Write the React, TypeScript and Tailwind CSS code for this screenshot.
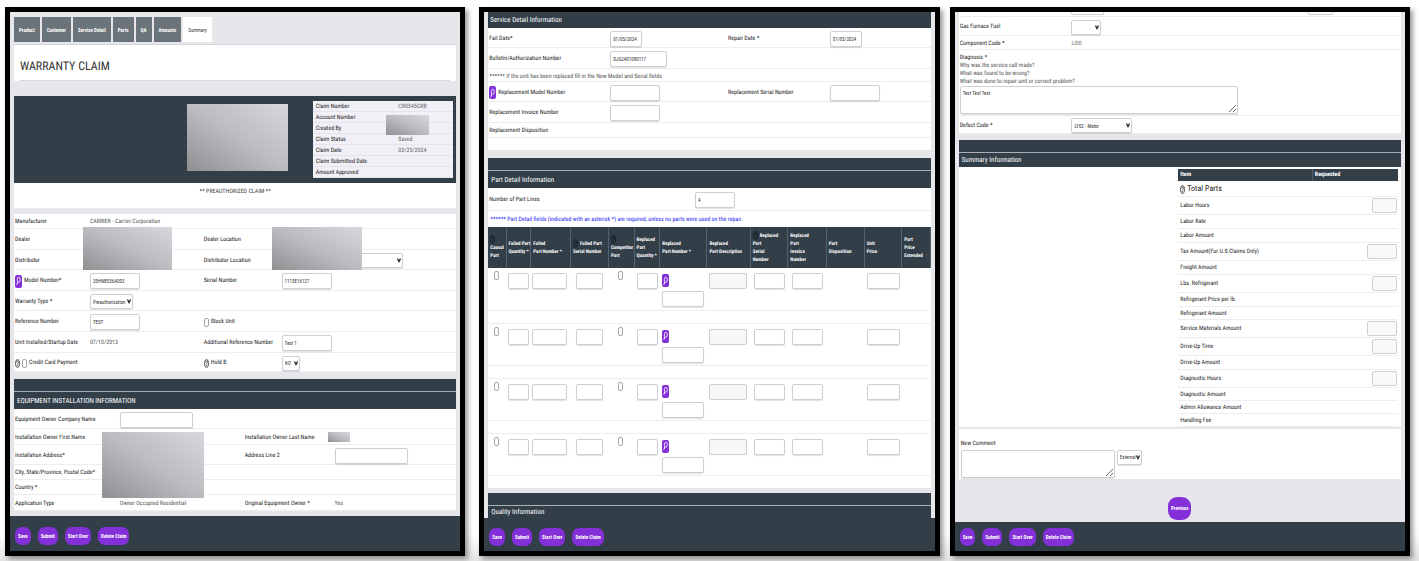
import { clsx } from "clsx";
import type { ReactNode } from "react";

const field =
  "block border border-[#cfcfd3] rounded-[2px] bg-white shadow-[0_1px_1px_rgba(0,0,0,0.12)] px-[2px] text-[5px] leading-[8px] text-[#333]";

function HelpIcon({ className }: { className?: string }) {
  return (
    <svg
      viewBox="0 0 10 18"
      className={clsx("w-[5px] h-[9px] shrink-0", className)}
      fill="none"
      stroke="currentColor"
      strokeWidth="1.600"
    >
      <ellipse cx="5" cy="9" rx="4" ry="8" />
      <path d="M3.4 6.5c0-3 3.4-3 3.2 0C6.5 8.500 5 8.500 5 11M5 12.500v1.800" strokeWidth="1.400" />
    </svg>
  );
}

function SearchButton({ label }: { label: string }) {
  return (
    <button
      type="button"
      aria-label={label}
      className="flex items-center justify-center w-[7px] h-[13px] shrink-0 rounded-[2px] bg-[#8430d8] text-white"
    >
      <svg viewBox="0 0 10 20" className="w-[5px] h-[10px]" fill="none" stroke="currentColor" strokeWidth="1.600">
        <ellipse cx="5.600" cy="7.500" rx="3" ry="5" />
        <path d="M3.800 12L1.500 17.500" strokeWidth="2" />
      </svg>
    </button>
  );
}

function Check({ id, label }: { id: string; label?: string }) {
  return (
    <input
      id={id}
      type="checkbox"
      aria-label={label}
      className="appearance-none block w-[5px] h-[9px] shrink-0 border border-[#a5a5aa] rounded-[2px] bg-white"
    />
  );
}

function TextBox({
  id,
  value,
  label,
  className,
}: {
  id: string;
  value?: string;
  label?: string;
  className?: string;
}) {
  return (
    <input
      id={id}
      type="text"
      aria-label={label}
      defaultValue={value}
      className={clsx(field, "h-[16px]", className)}
    />
  );
}

function Select({
  id,
  options,
  label,
  className,
}: {
  id: string;
  options: string[];
  label?: string;
  className?: string;
}) {
  return (
    <div className={clsx("relative", className)}>
      <select id={id} aria-label={label} className={clsx(field, "appearance-none w-full h-[15px]")}>
        {options.map((o) => (
          <option key={o}>{o}</option>
        ))}
      </select>
      <svg
        viewBox="0 0 8 10"
        className="absolute right-[2px] top-[5px] w-[4px] h-[5px] pointer-events-none"
        fill="none"
        stroke="#222"
        strokeWidth="2.500"
      >
        <path d="M1 1l3 6 3-6" />
      </svg>
    </div>
  );
}

function Redacted({ className }: { className: string }) {
  return (
    <div className={clsx("absolute bg-linear-to-tr from-[#909093] via-[#bcbbc0] to-[#d8d7dd]", className)} />
  );
}

function Panel({ children, className }: { children: ReactNode; className?: string }) {
  return (
    <section
      className={clsx(
        "flex flex-col flex-1 min-w-0 border-[5px] border-black bg-[#e7e6eb] shadow-[3px_3px_5px_rgba(0,0,0,0.4)]",
        className
      )}
    >
      {children}
    </section>
  );
}

function Actions({ className }: { className?: string }) {
  return (
    <footer className={clsx("flex items-center gap-[7px] bg-[#323e48] pl-[5px]", className)}>
      {["Save", "Submit", "Start Over", "Delete Claim"].map((name) => (
        <button
          key={name}
          type="button"
          className="h-[18px] px-[3px] rounded-[7px] bg-[#8430d8] text-white text-[5px] font-bold whitespace-nowrap"
        >
          {name}
        </button>
      ))}
    </footer>
  );
}

function SectionTitle({ children, className }: { children: ReactNode; className?: string }) {
  return (
    <div>
      <div className="h-[12px] bg-[#323e48]" />
      <h2
        className={clsx(
          "flex items-center pl-[3px] border-t border-[#a9b0b8] bg-[#323e48] text-white text-[7px]",
          className
        )}
      >
        {children}
      </h2>
    </div>
  );
}

function Row({ cols, className, children }: { cols: string; className: string; children?: ReactNode }) {
  return (
    <div className={clsx("grid items-center border-b border-[#ededf0] pl-[1px] pt-[2px]", cols, className)}>
      {children}
    </div>
  );
}

function Label({ htmlFor, children }: { htmlFor?: string; children: ReactNode }) {
  return (
    <label htmlFor={htmlFor} className="flex items-center gap-[2px] text-[#222] whitespace-nowrap">
      {children}
    </label>
  );
}

const tabs = ["Product", "Customer", "Service Detail", "Parts", "QA", "Amounts", "Summary"];

const claim = [
  ["Claim Number", "CR0345GRB"],
  ["Account Number", ""],
  ["Created By", ""],
  ["Claim Status", "Saved"],
  ["Claim Date", "03/25/2024"],
  ["Claim Submitted Date", ""],
  ["Amount Approved", ""],
];

const claimCols = "grid-cols-[75fr_114fr_78fr_175fr]";
const ownerCols = "grid-cols-[105fr_125fr_90fr_122fr]";
const serviceCols = "grid-cols-[121fr_118fr_102fr_101fr]";

function ClaimPanel() {
  return (
    <Panel className="mr-[14px]">
      <div className="flex-1 px-[4px]">
        <nav className="flex gap-[2px] pt-[5px] pb-[2px] border-b border-[#d3d6db]">
          {tabs.map((tab) => (
            <button
              key={tab}
              type="button"
              className={clsx(
                "h-[25px] px-[5px] text-[5px]",
                tab === "Summary" ? "bg-white text-[#333]" : "bg-[#6b737b] text-white font-bold"
              )}
            >
              {tab}
            </button>
          ))}
        </nav>
        <div className="h-[36px] bg-white px-[6px]">
          <h1 className="h-[36px] pt-[6px] flex items-center border-b border-[#d9d9dd] text-[12px] text-[#333]">
            WARRANTY CLAIM
          </h1>
        </div>
        <div className="relative mt-[15px] h-[87px] bg-[#323e48] flex justify-end pt-[5px] pr-[3px]">
          <Redacted className="left-[39%] top-[8px] w-[23%] h-[67px]" />
          <dl className="relative w-[32%] h-[77px] bg-[#f1f0f6]">
            {claim.map(([name, value]) => (
              <div
                key={name}
                className="grid grid-cols-[3fr_2fr] items-center h-[11px] pt-[2px] pl-[3px] border-b border-[#e5e4ea] leading-[8px]"
              >
                <dt className="text-[#222]">{name}</dt>
                <dd className="text-[#666]">{value}</dd>
              </div>
            ))}
            <Redacted className="left-[52%] top-[14px] w-[31%] h-[20px]" />
          </dl>
        </div>
        <p className="h-[25px] pt-[5px] bg-white text-center text-[#444]">** PREAUTHORIZED CLAIM **</p>

        <div className="relative mt-[6px] bg-white">
          <Row cols={claimCols} className="h-[15px]">
            <Label>Manufacturer</Label>
            <span>CARRIER - Carrier Corporation</span>
          </Row>
          <Row cols={claimCols} className="h-[21px]">
            <Label>Dealer</Label>
            <span />
            <Label>Dealer Location</Label>
          </Row>
          <Row cols={claimCols} className="h-[20px]">
            <Label>Distributor</Label>
            <span />
            <Label htmlFor="distributor-location">Distributor Location</Label>
            <Select id="distributor-location" options={[""]} className="w-[121px]" />
          </Row>
          <Row cols={claimCols} className="h-[21px]">
            <div className="flex items-center gap-[2px]">
              <SearchButton label="Find model" />
              <Label htmlFor="model">Model Number*</Label>
            </div>
            <TextBox id="model" value="25HNB536A003" className="w-[50px]" />
            <Label htmlFor="serial">Serial Number</Label>
            <TextBox id="serial" value="1113E16127" className="w-[50px]" />
          </Row>
          <Row cols={claimCols} className="h-[20px]">
            <Label htmlFor="warranty">Warranty Type *</Label>
            <Select id="warranty" options={["Preauthorization"]} className="w-[43px]" />
          </Row>
          <Row cols={claimCols} className="h-[21px]">
            <Label htmlFor="reference">Reference Number</Label>
            <TextBox id="reference" value="TEST" className="w-[50px]" />
            <Label htmlFor="stock">
              <Check id="stock" />
              Stock Unit
            </Label>
          </Row>
          <Row cols={claimCols} className="h-[21px]">
            <Label>Unit Installed/Startup Date</Label>
            <span>07/10/2013</span>
            <Label htmlFor="reference2">Additional Reference Number</Label>
            <TextBox id="reference2" value="Test 1" className="w-[50px]" />
          </Row>
          <Row cols={claimCols} className="h-[19px]">
            <Label htmlFor="credit">
              <HelpIcon />
              <Check id="credit" />
              Credit Card Payment
            </Label>
            <span />
            <Label htmlFor="hold">
              <HelpIcon />
              Hold B
            </Label>
            <Select id="hold" options={["NO", "YES"]} className="w-[18px]" />
          </Row>
          <Redacted className="left-[15.6%] top-[13px] w-[20.2%] h-[43px]" />
          <Redacted className="left-[58.4%] top-[13px] w-[20.2%] h-[43px]" />
        </div>

        <div className="mt-[7px]">
          <SectionTitle className="h-[18px]">EQUIPMENT INSTALLATION INFORMATION</SectionTitle>
        </div>
        <div className="relative bg-white">
          <Row cols={ownerCols} className="h-[20px]">
            <Label htmlFor="company">Equipment Owner Company Name</Label>
            <TextBox id="company" className="w-[73px]" />
          </Row>
          <Row cols={ownerCols} className="h-[16px]">
            <Label>Installation Owner First Name</Label>
            <span />
            <Label>Installation Owner Last Name</Label>
          </Row>
          <Row cols={ownerCols} className="h-[20px]">
            <Label>Installation Address*</Label>
            <span />
            <Label htmlFor="address2">Address Line 2</Label>
            <TextBox id="address2" className="w-[73px]" />
          </Row>
          <Row cols={ownerCols} className="h-[15px]">
            <Label>City, State/Province, Postal Code*</Label>
          </Row>
          <Row cols={ownerCols} className="h-[15px]">
            <Label>Country *</Label>
          </Row>
          <Row cols={ownerCols} className="h-[16px]">
            <Label>Application Type</Label>
            <span>Owner Occupied Residential</span>
            <Label>Original Equipment Owner *</Label>
            <span>Yes</span>
          </Row>
          <Redacted className="left-[20%] top-[23px] w-[23%] h-[66px]" />
          <Redacted className="left-[71%] top-[23px] w-[5%] h-[10px]" />
        </div>
      </div>
      <Actions className="h-[35px] pt-[4px]" />
    </Panel>
  );
}

const partColumns = [
  { name: ["Causal", "Part"], help: true, col: "w-[4%]" },
  { name: ["Failed Part", "Quantity *"], col: "w-[5.6%]" },
  { name: ["Failed", "Part Number *"], col: "w-[9%]" },
  { name: ["Failed Part", "Serial Number"], inlineHelp: true, col: "w-[8.6%]" },
  { name: ["Competitor", "Part"], help: true, col: "w-[5.8%]" },
  { name: ["Replaced", "Part", "Quantity *"], col: "w-[5.8%]" },
  { name: ["Replaced", "Part Number *"], col: "w-[10.7%]" },
  { name: ["Replaced", "Part Description"], col: "w-[9.8%]" },
  { name: ["Replaced", "Part", "Serial", "Number"], inlineHelp: true, col: "w-[8.5%]" },
  { name: ["Replaced", "Part", "Invoice", "Number"], col: "w-[8.7%]" },
  { name: ["Part", "Disposition"], col: "w-[8.6%]" },
  { name: ["Unit", "Price"], col: "w-[8.5%]" },
  { name: ["Part", "Price", "Extended"], col: "w-[6.4%]" },
];

function PartRow({ n }: { n: number }) {
  return (
    <>
      <tr className="h-[42px] border-b border-[#ededf0] align-top">
        <td className="pt-[3px] pl-[6px]">
          <Check id={`causal-${n}`} label="Causal Part" />
        </td>
        <td className="pt-[5px] pl-[2px]">
          <TextBox id={`failed-qty-${n}`} label="Failed Part Quantity" className="w-[21px]" />
        </td>
        <td className="pt-[5px] pl-[1px]">
          <TextBox id={`failed-number-${n}`} label="Failed Part Number" className="w-[35px]" />
        </td>
        <td className="pt-[5px] pl-[6px]">
          <TextBox id={`failed-serial-${n}`} label="Failed Part Serial Number" className="w-[27px]" />
        </td>
        <td className="pt-[3px] pl-[10px]">
          <Check id={`competitor-${n}`} label="Competitor Part" />
        </td>
        <td className="pt-[5px] pl-[3px]">
          <TextBox id={`qty-${n}`} label="Replaced Part Quantity" className="w-[21px]" />
        </td>
        <td className="pt-[6px] pl-[2px]">
          <SearchButton label="Find part" />
          <TextBox id={`number-${n}`} label="Replaced Part Number" className="mt-[4px] w-[42px]" />
        </td>
        <td className="pt-[5px] pl-[2px]">
          <input
            id={`description-${n}`}
            aria-label="Replaced Part Description"
            readOnly
            className="block w-[38px] h-[16px] rounded-[2px] border border-[#cfcfd3] bg-[#f7f7f8]"
          />
        </td>
        <td className="pt-[5px] pl-[4px]">
          <TextBox id={`serial-${n}`} label="Replaced Part Serial Number" className="w-[31px]" />
        </td>
        <td className="pt-[5px] pl-[4px]">
          <TextBox id={`invoice-${n}`} label="Replaced Part Invoice Number" className="w-[31px]" />
        </td>
        <td />
        <td className="pt-[5px] pl-[3px]">
          <TextBox id={`price-${n}`} label="Unit Price" className="w-[33px]" />
        </td>
        <td />
      </tr>
      <tr className={clsx("h-[13px]", n < 4 && "border-b border-[#ededf0]")}>
        <td colSpan={13} />
      </tr>
    </>
  );
}

function PartsPanel() {
  return (
    <Panel className="mr-[10px]">
      <div className="flex-1 px-[4px]">
        <h2 className="h-[16px] flex items-center pl-[2px] bg-[#323e48] text-white text-[7px]">
          Service Detail Information
        </h2>
        <div className="bg-white h-[122px]">
          <Row cols={serviceCols} className="h-[20px]">
            <Label htmlFor="fail">Fail Date*</Label>
            <TextBox id="fail" value="01/05/2024" className="w-[32px]" />
            <Label htmlFor="repair">Repair Date *</Label>
            <TextBox id="repair" value="01/05/2024" className="w-[32px]" />
          </Row>
          <Row cols={serviceCols} className="h-[21px]">
            <Label htmlFor="bulletin">Bulletin/Authorization Number</Label>
            <TextBox id="bulletin" value="DJG2401080117" className="w-[57px]" />
          </Row>
          <p className="h-[13px] pt-[4px] pl-[1px] border-b border-[#ededf0]">
            ****** If the unit has been replaced fill in the New Model and Serial fields
          </p>
          <Row cols={serviceCols} className="h-[20px]">
            <div className="flex items-center gap-[2px]">
              <SearchButton label="Find replacement model" />
              <Label htmlFor="rmodel">Replacement Model Number</Label>
            </div>
            <TextBox id="rmodel" className="w-[50px]" />
            <Label htmlFor="rserial">Replacement Serial Number</Label>
            <TextBox id="rserial" className="w-[50px]" />
          </Row>
          <Row cols={serviceCols} className="h-[21px]">
            <Label htmlFor="rinvoice">Replacement Invoice Number</Label>
            <TextBox id="rinvoice" className="w-[50px]" />
          </Row>
          <Row cols={serviceCols} className="h-[15px]">
            <Label>Replacement Disposition</Label>
          </Row>
        </div>
        <div className="mt-[8px]">
          <SectionTitle className="h-[18px]">Part Detail Information</SectionTitle>
        </div>
        <div className="bg-white">
          <Row cols="grid-cols-[206fr_236fr]" className="h-[23px]">
            <Label htmlFor="lines">Number of Part Lines</Label>
            <TextBox id="lines" value="4" className="w-[40px]" />
          </Row>
          <p className="h-[16px] pt-[5px] pl-[2px] text-[#2424ee]">
            ****** Part Detail fields (indicated with an asterisk *) are required, unless no parts were used on the
            repair.
          </p>
          <table className="w-full table-fixed border-collapse">
            <thead>
              <tr className="h-[41px] bg-[#323e48] text-white text-left text-[5px] leading-[8px]">
                {partColumns.map(({ name, help, inlineHelp, col }, i) => (
                  <th key={i} className={clsx("pl-[2px] border-r border-[#56616b] whitespace-nowrap", col)}>
                    {help && <HelpIcon className="block text-[#0e151b]" />}
                    {name.map((line, j) => (
                      <span key={j} className="flex items-center gap-[2px]">
                        {inlineHelp && j === 0 && <HelpIcon className="text-[#0e151b]" />}
                        {line}
                      </span>
                    ))}
                  </th>
                ))}
              </tr>
            </thead>
            <tbody>
              {[1, 2, 3, 4].map((n) => (
                <PartRow key={n} n={n} />
              ))}
            </tbody>
          </table>
        </div>
        <div className="mt-[5px]">
          <SectionTitle className="h-[13px]">Quality Information</SectionTitle>
        </div>
      </div>
      <Actions className="h-[33px] pt-[4px]" />
    </Panel>
  );
}

const summary = [
  { name: "Labor Hours", row: "h-[18px]", input: "w-[25px]" },
  { name: "Labor Rate", row: "h-[14px]" },
  { name: "Labor Amount", row: "h-[14px]" },
  { name: "Tax Amount(For U.S Claims Only)", row: "h-[18px]", input: "w-[30px]" },
  { name: "Freight Amount", row: "h-[14px]" },
  { name: "Lbs. Refrigerant", row: "h-[18px]", input: "w-[25px]" },
  { name: "Refrigerant Price per lb.", row: "h-[14px]" },
  { name: "Refrigerant Amount", row: "h-[13px]" },
  { name: "Service Materials Amount", row: "h-[18px]", input: "w-[30px]" },
  { name: "Drive-Up Time", row: "h-[18px]", input: "w-[25px]" },
  { name: "Drive-Up Amount", row: "h-[14px]" },
  { name: "Diagnostic Hours", row: "h-[18px]", input: "w-[25px]" },
  { name: "Diagnostic Amount", row: "h-[13px]" },
  { name: "Admin Allowance Amount", row: "h-[13px]" },
  { name: "Handling Fee", row: "h-[13px]" },
];

const diagnosisCols = "grid-cols-[112fr_330fr]";

function SummaryPanel() {
  return (
    <Panel>
      <div className="flex-1 px-[4px]">
        <div className="bg-white">
          <div className="grid grid-cols-[112fr_237fr_93fr] h-[5px] pl-[1px] border-b border-[#ededf0]">
            <span />
            <div className="w-[33px] h-[3px] rounded-b-[2px] border border-t-0 border-[#cfcfd3]" />
            <div className="w-[25px] h-[3px] rounded-b-[2px] border border-t-0 border-[#cfcfd3]" />
          </div>
          <Row cols={diagnosisCols} className="h-[19px]">
            <Label htmlFor="fuel">Gas Furnace Fuel</Label>
            <Select id="fuel" options={[""]} className="w-[30px]" />
          </Row>
          <Row cols={diagnosisCols} className="h-[14px]">
            <Label>Component Code *</Label>
            <span className="text-[#777]">LI00</span>
          </Row>
          <div className="h-[66px] pt-[4px] pl-[1px] border-b border-[#ededf0] leading-[8px]">
            <Label htmlFor="diagnosis">Diagnosis *</Label>
            <p>Why was the service call made?</p>
            <p>What was found to be wrong?</p>
            <p>What was done to repair unit or correct problem?</p>
            <textarea
              id="diagnosis"
              defaultValue="Test Test Test"
              className={clsx(field, "w-[63%] h-[28px] pt-[2px]")}
            />
          </div>
          <Row cols={diagnosisCols} className="h-[18px]">
            <Label htmlFor="defect">Defect Code *</Label>
            <Select id="defect" options={["LY02 - Motor"]} className="w-[61px]" />
          </Row>
        </div>
        <div className="mt-[6px]">
          <SectionTitle className="h-[15px]">Summary Information</SectionTitle>
        </div>
        <div className="flex justify-end pt-[2px] pr-[3px] bg-white">
          <table className="w-[50%] border-collapse">
            <thead>
              <tr className="h-[12px] bg-[#323e48] text-white text-left leading-[8px]">
                <th className="w-[61%] pl-[2px] border-r border-[#56616b]">Item</th>
                <th className="pl-[2px]">Requested</th>
              </tr>
            </thead>
            <tbody>
              <tr className="h-[15px] border-b border-[#ededf0]">
                <td colSpan={2} className="pt-[2px] pl-[2px]">
                  <span className="flex items-center gap-[2px] text-[8px] leading-[10px] text-[#222]">
                    <HelpIcon />
                    Total Parts
                  </span>
                </td>
              </tr>
              {summary.map(({ name, row, input }) => (
                <tr key={name} className={clsx("border-b border-[#ededf0] leading-[8px]", row)}>
                  <td className="pl-[2px] pt-[2px]">
                    <Label htmlFor={input && name}>{name}</Label>
                  </td>
                  <td className="pr-[1px]">
                    {input && (
                      <input
                        id={name}
                        className={clsx(
                          "block ml-auto h-[15px] rounded-[2px] border border-[#cfcfd3] bg-[#f9f9fa]",
                          input
                        )}
                      />
                    )}
                  </td>
                </tr>
              ))}
            </tbody>
          </table>
        </div>
        <div className="mt-[2px] h-[50px] pt-[11px] pl-[2px] bg-white">
          <Label htmlFor="comment">New Comment</Label>
          <div className="flex items-start gap-[2px] pt-[2px]">
            <textarea id="comment" className={clsx(field, "w-[35%] h-[28px]")} />
            <Select id="visibility" label="Comment visibility" options={["External"]} className="w-[25px]" />
          </div>
        </div>
        <div className="flex justify-center pt-[18px]">
          <button type="button" className="w-[23px] h-[23px] rounded-[9px] bg-[#8430d8] text-white text-[5px] font-bold">
            Previous
          </button>
        </div>
      </div>
      <Actions className="h-[29px]" />
    </Panel>
  );
}

export default function App() {
  return (
    <main className="flex min-h-screen pt-[7px] pb-[5px] pl-[5px] pr-[9px] bg-linear-to-b from-white from-95% to-[#e4e4e4] font-['Roboto_Condensed','Roboto',sans-serif] [text-rendering:geometricPrecision] text-[6px] leading-[8px] text-[#555]">
      <ClaimPanel />
      <PartsPanel />
      <SummaryPanel />
    </main>
  );
}
